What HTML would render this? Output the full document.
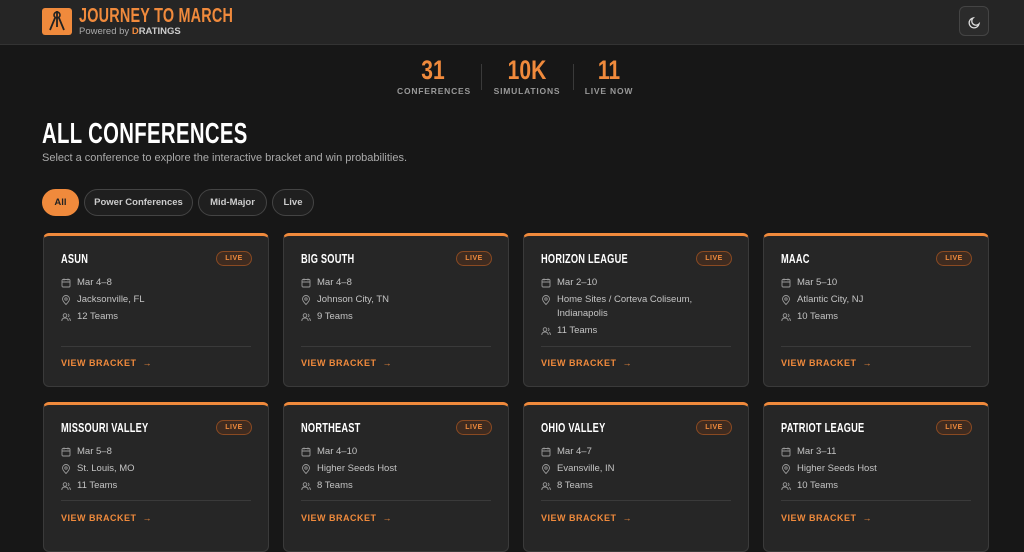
<!DOCTYPE html><html><head><meta charset="utf-8"><style>
*{box-sizing:border-box;margin:0;padding:0}
body{width:1024px;height:548px;overflow:hidden;background:#171717;font-family:"Liberation Sans",sans-serif;color:#ddd;position:relative}
.cond{font-family:"Liberation Sans",sans-serif;font-weight:bold;transform-origin:left top;white-space:nowrap}
header{position:absolute;left:0;top:0;width:1024px;height:45px;background:#252525;border-bottom:1px solid #333}
.logo{position:absolute;left:42px;top:8px;width:30px;height:27px;background:#f08a3c;border-radius:3px}
.brand{position:absolute;left:79px;top:5px;font-size:20px;color:#f08a3c;letter-spacing:.3px;transform:scaleX(.72)}
.pow{position:absolute;left:79px;top:26px;font-size:9.5px;color:#aaa}
.pow b{color:#ccc}
.moon{position:absolute;left:959px;top:6px;width:30px;height:30px;border:1px solid #444;border-radius:6px;background:#2b2b2b}
.stat{position:absolute;top:57px;text-align:center}
.stat .n{font-size:27px;color:#f08a3c;line-height:26px;font-weight:bold;transform:scaleX(.78)}
.stat .l{font-size:8.5px;color:#999;letter-spacing:.8px;font-weight:bold;margin-top:3px;white-space:nowrap}
.sep{position:absolute;top:64px;width:1px;height:26px;background:#3a3a3a}
h1{position:absolute;left:42px;top:118px;font-size:29px;color:#fff;letter-spacing:.5px;transform:scaleX(.7)}
.sub{position:absolute;left:42px;top:152px;font-size:11px;color:#aaa}
.pill{position:absolute;top:189px;height:27px;border:1px solid #444;border-radius:14px;font-size:9.5px;font-weight:bold;color:#ccc;line-height:25px;text-align:center;background:#1f1f1f}
.card{position:absolute;width:226px;height:154px;background:#262626;border:1px solid #3a3a3a;border-top:3px solid #f08a3c;border-radius:6px}
.card h3{position:absolute;left:17px;top:16px;font-size:12.5px;color:#fff;letter-spacing:.3px;transform:scaleX(.74)}
.live{position:absolute;right:16px;top:15px;width:36px;height:15px;border:1px solid #8a4a22;background:#3e2b20;border-radius:8px;font-size:7px;font-weight:bold;color:#f08a3c;text-align:center;line-height:13px;letter-spacing:.5px}
.row{position:absolute;left:17px;font-size:9.5px;color:#c4c4c4;display:flex;gap:6px;line-height:14px}
.row svg{flex:none;margin-top:2px}
.hr{position:absolute;left:17px;right:17px;height:1px;background:#3a3a3a}
.vb{position:absolute;left:17px;font-size:9px;color:#f08a3c;font-weight:bold;letter-spacing:.5px}
</style></head><body>
<header>
<div class="logo"><svg width="30" height="27" viewBox="0 0 30 27"><circle cx="15" cy="7" r="3" fill="none" stroke="#222" stroke-width="1.6"/><path d="M15 3v16M13 10l-5 12M17 10l5 12" stroke="#222" stroke-width="1.8" fill="none"/></svg></div>
<div class="brand cond">JOURNEY TO MARCH</div>
<div class="pow">Powered by <b style="color:#f08a3c">D</b><b>RATINGS</b></div>
<div class="moon"><svg width="30" height="30" viewBox="0 0 30 30"><path d="M13 11a5 5 0 1 0 6 6a4 4 0 0 1-6-6z" fill="none" stroke="#ddd" stroke-width="1.3"/></svg></div>
</header>
<div class="stat" style="left:397px;width:72px"><div class="n" style="transform-origin:center">31</div><div class="l">CONFERENCES</div></div>
<div class="sep" style="left:481px"></div>
<div class="stat" style="left:492px;width:70px"><div class="n" style="transform-origin:center">10K</div><div class="l">SIMULATIONS</div></div>
<div class="sep" style="left:573px"></div>
<div class="stat" style="left:584px;width:50px"><div class="n" style="transform-origin:center">11</div><div class="l">LIVE NOW</div></div>
<h1 class="cond">ALL CONFERENCES</h1>
<div class="sub">Select a conference to explore the interactive bracket and win probabilities.</div>
<div class="pill" style="left:42px;width:37px;background:#f08a3c;border-color:#f08a3c;color:#222">All</div>
<div class="pill" style="left:84px;width:109px">Power Conferences</div>
<div class="pill" style="left:198px;width:69px">Mid-Major</div>
<div class="pill" style="left:272px;width:42px">Live</div>
<div id="cards"></div>
<script>
var cal='<svg width="10" height="10" viewBox="0 0 10 10"><rect x="1" y="1.5" width="8" height="7.5" rx="1" fill="none" stroke="#999" stroke-width=".9"/><path d="M1 4h8M3 .5v2M7 .5v2" stroke="#999" stroke-width=".9"/></svg>';
var pin='<svg width="10" height="10" viewBox="0 0 10 10"><path d="M5 9.5C2 6.5 1.5 5 1.5 4a3.5 3.5 0 0 1 7 0c0 1-.5 2.5-3.5 5.5z" fill="none" stroke="#999" stroke-width=".9"/><circle cx="5" cy="4" r="1.2" fill="none" stroke="#999" stroke-width=".9"/></svg>';
var ppl='<svg width="10" height="10" viewBox="0 0 10 10"><circle cx="4" cy="3.5" r="1.8" fill="none" stroke="#999" stroke-width=".9"/><path d="M.8 9c0-2 1.4-3 3.2-3s3.2 1 3.2 3M7 2a1.6 1.6 0 0 1 0 3M8.2 6.3c.8.4 1.2 1.3 1.2 2.7" fill="none" stroke="#999" stroke-width=".9"/></svg>';
var d=[["ASUN","Mar 4–8","Jacksonville, FL","12 Teams"],["BIG SOUTH","Mar 4–8","Johnson City, TN","9 Teams"],["HORIZON LEAGUE","Mar 2–10","Home Sites / Corteva Coliseum, Indianapolis","11 Teams"],["MAAC","Mar 5–10","Atlantic City, NJ","10 Teams"],["MISSOURI VALLEY","Mar 5–8","St. Louis, MO","11 Teams"],["NORTHEAST","Mar 4–10","Higher Seeds Host","8 Teams"],["OHIO VALLEY","Mar 4–7","Evansville, IN","8 Teams"],["PATRIOT LEAGUE","Mar 3–11","Higher Seeds Host","10 Teams"]];
var h='';d.forEach(function(c,i){var x=43+(i%4)*240,y=i<4?233:402,tall=i==2;
h+='<div class="card" style="left:'+x+'px;top:'+y+'px;height:'+(i<4?154:150)+'px"><h3 class="cond">'+c[0]+'</h3><div class="live">LIVE</div>'+
'<div class="row" style="top:40px">'+cal+c[1]+'</div>'+
'<div class="row" style="top:57px;width:180px">'+pin+'<span>'+c[2]+'</span></div>'+
'<div class="row" style="top:'+(tall?88:74)+'px">'+ppl+c[3]+'</div>'+
'<div class="hr" style="top:'+(i<4?110:95)+'px"></div><div class="vb" style="top:'+(i<4?122:108)+'px">VIEW BRACKET &nbsp;→</div></div>';});
document.getElementById('cards').innerHTML=h;
</script>
</body></html>
